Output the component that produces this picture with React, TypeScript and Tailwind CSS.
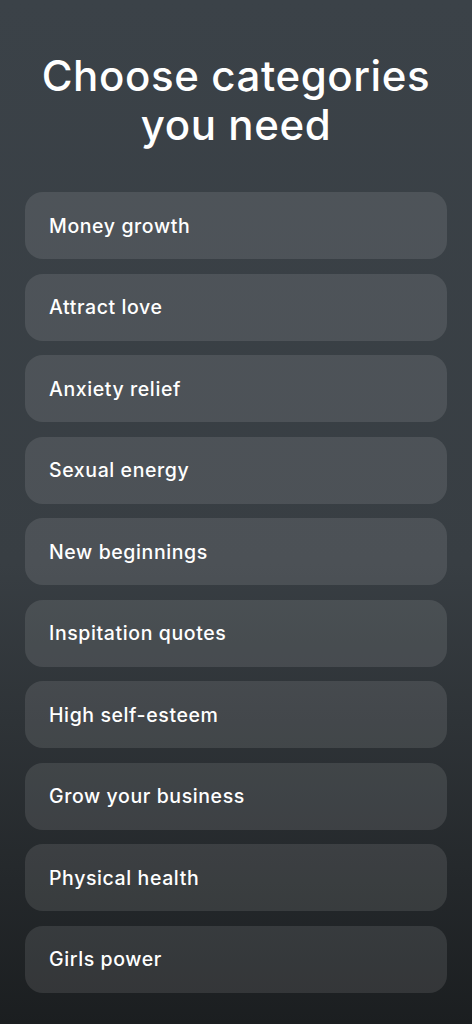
const categories = [
  "Money growth",
  "Attract love",
  "Anxiety relief",
  "Sexual energy",
  "New beginnings",
  "Inspitation quotes",
  "High self-esteem",
  "Grow your business",
  "Physical health",
  "Girls power",
];

export default function App() {
  return (
    <div className="min-h-[1024px] w-full bg-[linear-gradient(to_bottom,#3b4248_0%,#383e43_55%,#1b1e20_100%)] px-[25px] pt-[51px] pb-8 font-['Inter',sans-serif]">
      <h1 className="text-center text-[42px] leading-[49px] font-medium tracking-[0.6px] text-white">
        Choose categories
        <br />
        you need
      </h1>

      <div className="mt-[43px] flex flex-col gap-[14.5px]">
        {categories.map((c) => (
          <button
            key={c}
            className="flex h-[67px] w-full items-center rounded-[18px] bg-white/10 px-6 pt-[2px] text-left text-[19.5px] font-medium tracking-[0.6px] text-white"
          >
            {c}
          </button>
        ))}
      </div>
    </div>
  );
}
